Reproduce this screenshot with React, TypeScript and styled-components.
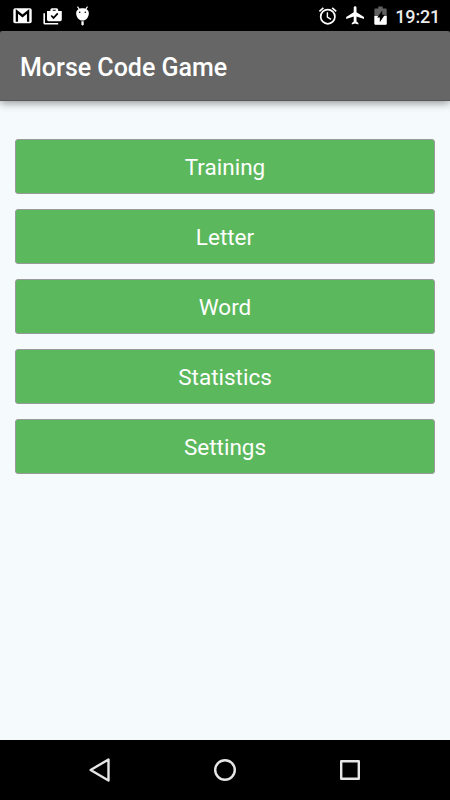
import React from "react";
import styled, { createGlobalStyle } from "styled-components";

const GlobalStyle = createGlobalStyle`
  * { box-sizing: border-box; }
  html, body { margin: 0; padding: 0; background: #f5fafc; }
`;

const Screen = styled.div`
  display: flex;
  flex-direction: column;
  width: 450px;
  height: 800px;
  background: #f5fafc;
  font-family: Roboto, "Liberation Sans", sans-serif;
  color: #fff;
  overflow: hidden;
`;

const StatusBar = styled.div`
  display: flex;
  justify-content: space-between;
  flex: none;
  height: 31px;
  padding: 0 10px 0 12px;
  background: #000;
`;

const StatusGroup = styled.div<{ $gap: number }>`
  display: flex;
  align-items: center;
  gap: ${(p) => p.$gap}px;
`;

const StatusIcon = styled.svg`
  display: block;
  flex: none;
  fill: #fff;
`;

const Clock = styled.span`
  width: 45px;
  padding-top: 2px;
  font-size: 18px;
  line-height: 22px;
  font-weight: 500;
  letter-spacing: -0.2px;
  text-align: right;
  color: #ececec;
`;

const Header = styled.header`
  display: flex;
  align-items: center;
  flex: none;
  height: 70px;
  padding: 4px 20px 0;
  background: #666;
  border-bottom: 1px solid #575757;
  border-radius: 2px 2px 0 0;
  box-shadow: 0 2px 8px rgba(0, 0, 0, 0.42);
`;

const HeaderWrap = styled.div`
  flex: none;
  background: #000;
  height: 70px;
`;

const Title = styled.h1`
  margin: 0;
  font-size: 25px;
  line-height: 30px;
  font-weight: 500;
`;

const Menu = styled.main`
  display: flex;
  flex-direction: column;
  flex: 1;
  gap: 15px;
  padding: 38px 15px 0;
`;

const MenuButton = styled.button`
  flex: none;
  height: 55px;
  padding: 0;
  border: 1px solid #999;
  border-radius: 3px;
  background: #5cb85c;
  color: #fff;
  font-family: inherit;
  font-size: 22.5px;
  line-height: 28px;
`;

const NavBar = styled.nav`
  display: flex;
  align-items: center;
  justify-content: center;
  gap: 95px;
  flex: none;
  height: 60px;
  background: #000;
`;

const NavIcon = styled.svg`
  display: block;
  fill: none;
  stroke: #e6e6e6;
  stroke-width: 2.4;
  stroke-linejoin: round;
`;

const items = ["Training", "Letter", "Word", "Statistics", "Settings"];

const MailIcon = () => (
  <StatusIcon width="21" height="31" viewBox="12 0 21 31">
    <rect x="13.3" y="8.2" width="18.4" height="15" rx="1.8" />
    <path
      d="M16.9 21.8V11.4l5.6 4.6 5.6-4.6v10.4"
      fill="none"
      stroke="#000"
      strokeWidth="2.3"
    />
  </StatusIcon>
);

const ShopIcon = () => (
  <StatusIcon width="21" height="31" viewBox="43 0 21 31">
    <path d="M43.4 13.2h1.6v9.7h13.2v1.6H45a1.6 1.6 0 0 1-1.6-1.6z" />
    <path
      fillRule="evenodd"
      d="M47 11h3.4V9.8A1.6 1.6 0 0 1 52 8.2h4.6a1.6 1.6 0 0 1 1.6 1.6V11h3.6v8.6a1.7 1.7 0 0 1-1.7 1.7H48.7a1.7 1.7 0 0 1-1.7-1.7zM52.7 10.8h3V9.7h-3z"
    />
    <path d="M51.2 15.5l2.3 2.4 4.3-4.5" fill="none" stroke="#000" strokeWidth="1.7" />
  </StatusIcon>
);

const AndroidIcon = () => (
  <StatusIcon width="17" height="31" viewBox="74 0 17 31">
    <path d="M77.5 6.6l2 3M87.5 6.6l-2 3" fill="none" stroke="#fff" strokeWidth="1.1" />
    <path d="M76.2 13.2C76.2 9.8 79 8.2 82.5 8.2s6.3 1.6 6.3 5c0 4-2.6 7.3-6.3 7.3s-6.3-3.3-6.3-7.3z" />
    <path d="M81.4 21.2h2.3v3.4l-1.1 1.2-1.2-1.2z" />
    <circle cx="79.7" cy="12.3" r="0.8" fill="#000" />
    <circle cx="85.3" cy="12.3" r="0.8" fill="#000" />
  </StatusIcon>
);

const AlarmIcon = () => (
  <StatusIcon width="21" height="31" viewBox="317 0 21 31">
    <g fill="none" stroke="#fff" strokeWidth="1.7">
      <circle cx="327.8" cy="16.7" r="7.1" />
      <path d="M319.4 11.3l4-3.4M336.2 11.3l-4-3.4" />
      <path d="M327.4 12.2v5l3.6 2.2" strokeWidth="1.4" />
    </g>
  </StatusIcon>
);

const PlaneIcon = () => (
  <StatusIcon width="21" height="31" viewBox="344 0 21 31">
    <path d="M364 18.9v-1.9l-7.5-4.7V7.6a1.4 1.4 0 0 0-2.8 0v4.7l-7.5 4.7v1.9l7.5-2.3v5l-1.9 1.5v1.4l3.3-.9 3.3.9v-1.4l-1.9-1.5v-5z" />
  </StatusIcon>
);

const BatteryIcon = () => (
  <StatusIcon width="18" height="31" viewBox="371 0 18 31">
    <path
      fill="#606060"
      d="M375.5 8.4h2.8V6.6h4.4v1.8h2.9a1.1 1.1 0 0 1 1.1 1.1v14.2a1.1 1.1 0 0 1-1.1 1.1h-10.1a1.1 1.1 0 0 1-1.1-1.1V9.5a1.1 1.1 0 0 1 1.1-1.1z"
    />
    <path d="M374.4 16h12.3v7.7a1.1 1.1 0 0 1-1.1 1.1h-10.1a1.1 1.1 0 0 1-1.1-1.1z" />
    <path d="M382.2 10.6l-5 6.9h2.6v4.8l5-7.6h-2.6z" fill="#000" />
  </StatusIcon>
);

export default function App() {
  return (
    <>
      <GlobalStyle />
      <Screen>
        <StatusBar>
          <StatusGroup $gap={10}>
            <MailIcon />
            <ShopIcon />
            <AndroidIcon />
          </StatusGroup>
          <StatusGroup $gap={6}>
            <AlarmIcon />
            <PlaneIcon />
            <BatteryIcon />
            <Clock>19:21</Clock>
          </StatusGroup>
        </StatusBar>
        <HeaderWrap>
          <Header>
            <Title>Morse Code Game</Title>
          </Header>
        </HeaderWrap>
        <Menu>
          {items.map((label) => (
            <MenuButton key={label}>{label}</MenuButton>
          ))}
        </Menu>
        <NavBar>
          <NavIcon width="30" height="30" viewBox="85 755 30 30">
            <path d="M90.6 770l17.9-10.5v21z" />
          </NavIcon>
          <NavIcon width="30" height="30" viewBox="210 755 30 30">
            <circle cx="225" cy="770" r="9.8" />
          </NavIcon>
          <NavIcon width="30" height="30" viewBox="335 755 30 30">
            <rect x="341.2" y="761.2" width="17.6" height="17.6" />
          </NavIcon>
        </NavBar>
      </Screen>
    </>
  );
}
